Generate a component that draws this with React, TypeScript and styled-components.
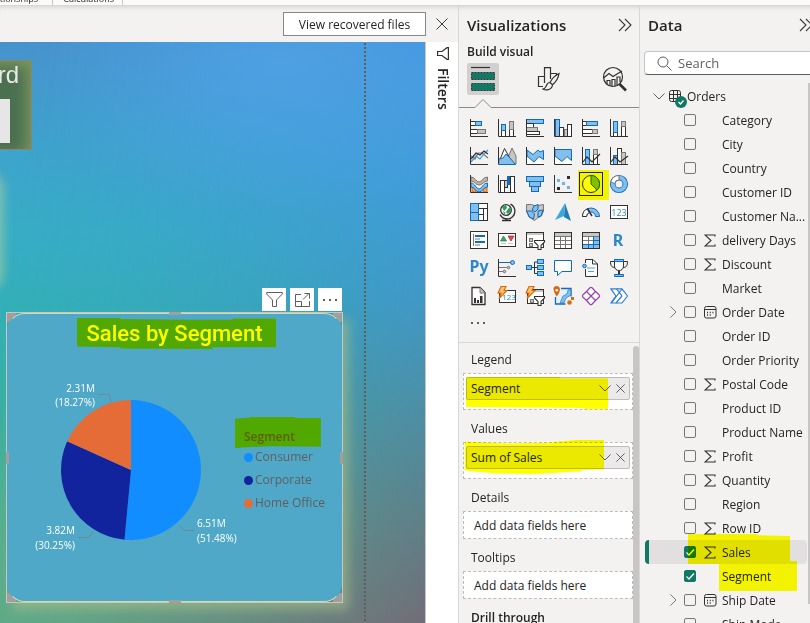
import React from "react";
import styled, { createGlobalStyle, css } from "styled-components";

const GlobalStyle = createGlobalStyle`
  * { box-sizing: border-box; }
  body {
    margin: 0;
    overflow: hidden;
    background: #f3f2f1;
    color: #252423;
    font-family: "Open Sans", "Noto Sans", sans-serif;
    font-size: 12px;
    line-height: 16px;
  }
  button, input { font: inherit; color: inherit; }
  button { padding: 0; border: 0; background: none; cursor: pointer; }
  h1, h2, h3, p, ul { margin: 0; padding: 0; font-size: inherit; }
  svg { display: block; }
`;

const DARK = "#323130";
const BLUE = "#0f6cbd";
const SKY = "#83beec";
const GRAY = "#c8c6c4";
const GRAY_LINE = "#797775";
const ORANGE = "#d8690e";

/* ---------- frame ---------- */

const Window = styled.div`
  display: flex;
  flex-direction: column;
  height: 100vh;
  overflow: hidden;
`;

const Ribbon = styled.header`
  position: relative;
  z-index: 2;
  display: flex;
  align-items: flex-end;
  flex: none;
  height: 6px;
  overflow: hidden;
  background: #fbfafa;
  border-bottom: 1px solid #d9d7d5;
  font-size: 9px;
  line-height: 12px;
`;

const RibbonGroup = styled.span<{ $width: number }>`
  display: flex;
  justify-content: flex-end;
  flex: none;
  width: ${(p) => p.$width}px;
  padding-right: ${(p) => (p.$width > 60 ? 8 : 14)}px;
  border-right: 1px solid #c8c6c4;
`;

const Panes = styled.div`
  display: flex;
  flex: 1;
  min-height: 0;
  box-shadow: inset 0 5px 5px -4px #d2d0ce;
`;

const ReportColumn = styled.main`
  display: flex;
  flex-direction: column;
  flex: 1;
  min-width: 0;
`;

const NoticeBar = styled.div`
  display: flex;
  align-items: center;
  justify-content: flex-end;
  flex: none;
  gap: 10px;
  height: 36px;
  padding-right: 10px;
`;

const RecoverButton = styled.button`
  width: 143px;
  height: 24px;
  padding-top: 2px;
  background: #fff;
  border: 1px solid #8a8886;
`;

const ReportRow = styled.div`
  display: flex;
  flex: 1;
  min-height: 0;
`;

const FiltersPane = styled.aside`
  display: flex;
  flex-direction: column;
  align-items: center;
  flex: none;
  gap: 8px;
  width: 33px;
  padding-top: 5px;
  padding-left: 2px;
  background: #fff;
  border-left: 1px solid #c8c6c4;
`;

const FiltersTitle = styled.h2`
  writing-mode: vertical-rl;
  font-size: 14px;
  line-height: 18px;
  font-weight: 600;
`;

/* ---------- canvas ---------- */

const Canvas = styled.section`
  position: relative;
  flex: 1;
  min-width: 0;
  overflow: hidden;
  background: linear-gradient(#4792cc 0%, #3ea3cc 18%, #37adc6 33%, #33b0b6 47%, #38b0a4 62%, #55b28e 84%, #60ae8a 100%);
  isolation: isolate;

  &::before {
    content: "";
    position: absolute;
    inset: 0;
    z-index: -1;
    background: linear-gradient(#4597e4 0%, #4398dc 25%, #4393c8 45%, #4f8ba8 62%, #607d88 82%, #716d78 100%);
    mask-image: linear-gradient(100deg, transparent 8%, rgba(0, 0, 0, 0.12) 32%, rgba(0, 0, 0, 0.45) 62%, #000 100%);
  }

  &::after {
    content: "";
    position: absolute;
    inset: 0;
    z-index: -1;
    background: radial-gradient(ellipse 260px 150px at 66% 4%, rgba(80, 164, 232, 0.75), transparent);
  }
`;

const PageEdge = styled.div`
  position: absolute;
  top: 1px;
  bottom: 0;
  right: 59px;
  width: 2px;
  background: repeating-linear-gradient(#605e5c 0 2px, transparent 2px 4px);
`;

const HeadingCard = styled.div`
  position: absolute;
  top: 18px;
  left: -120px;
  width: 152px;
  height: 90px;
  padding: 2px 12px 0 0;
  background: #4b7050;
  border: 1px solid #84877a;
  box-shadow: inset -5px 5px 14px #7b955f;
  color: #e9e9e9;
  font-family: "Liberation Sans", sans-serif;
  font-size: 24px;
  line-height: 24px;
  text-align: right;
`;

const HeadingSlot = styled.div`
  width: 129px;
  height: 44px;
  margin-top: 12px;
  background: #e6e6e6;
`;

const EdgeGlow = styled.div`
  position: absolute;
  top: 134px;
  left: -30px;
  width: 30px;
  height: 110px;
  border-radius: 12px;
  box-shadow: 0 0 10px 4px rgba(170, 205, 160, 0.6);
`;

const VisualTools = styled.div`
  position: absolute;
  top: 246px;
  left: 262px;
  display: flex;
  gap: 4px;
`;

const ToolButton = styled.button`
  display: grid;
  place-items: center;
  width: 24px;
  height: 23px;
  background: #fff;
`;

const VisualFrame = styled.article`
  position: absolute;
  top: 270px;
  left: 6px;
  width: 337px;
  height: 291px;
  border: 1px solid #c8c6c4;
  background:
    linear-gradient(#a19f9d, #a19f9d) 0 0 / 9px 9px,
    linear-gradient(#a19f9d, #a19f9d) 100% 0 / 9px 9px,
    linear-gradient(#a19f9d, #a19f9d) 0 100% / 9px 9px,
    linear-gradient(#a19f9d, #a19f9d) 100% 100% / 9px 9px;
  background-repeat: no-repeat;
  box-shadow: 6px 7px 10px rgba(165, 190, 135, 0.6);
`;

const VisualBody = styled.div`
  display: flex;
  flex-direction: column;
  height: 100%;
  background: #50a8c8;
  border: 1px solid #cfdcae;
  border-color: #cfdcae transparent;
  border-radius: 18px;
`;

const Handle = styled.i<{ $side: "top" | "bottom" | "left" | "right" }>`
  position: absolute;
  background: #a19f9d;
  ${(p) =>
    p.$side === "top" || p.$side === "bottom"
      ? css`left: calc(50% - 6px); width: 12px; height: 3px;`
      : css`top: calc(50% - 6px); width: 3px; height: 12px;`}
  ${(p) => p.$side}: -1px;
`;

const Marked = styled.span<{ $shape?: string; $inset: string }>`
  position: relative;
  &::after {
    content: "";
    position: absolute;
    inset: ${(p) => p.$inset};
    background: #ff0;
    mix-blend-mode: multiply;
    pointer-events: none;
    clip-path: ${(p) => p.$shape ?? "none"};
  }
`;

const VisualTitle = styled.h3`
  padding-top: 5px;
  color: #fff;
  font-family: Roboto, sans-serif;
  font-size: 22px;
  line-height: 29px;
  font-weight: 500;
  text-align: center;
`;

const ChartRow = styled.div`
  display: flex;
  flex: 1;
`;

const Legend = styled.div`
  display: flex;
  flex-direction: column;
  gap: 4px;
  padding-top: 81px;
  color: #605e5c;
`;

const LegendTitle = styled.strong`
  font-weight: 600;
`;

const LegendItems = styled.ul`
  display: grid;
  gap: 7px;
  list-style: none;
`;

const LegendItem = styled.li<{ $color: string }>`
  display: flex;
  align-items: center;
  gap: 2px;
  white-space: nowrap;
  &::before {
    content: "";
    width: 9px;
    height: 9px;
    border-radius: 50%;
    background: ${(p) => p.$color};
  }
`;

/* ---------- visualizations ---------- */

const VizPane = styled.aside`
  display: flex;
  flex-direction: column;
  flex: none;
  width: 182px;
  border-left: 1px solid #d9d7d5;
  border-right: 1px solid #d9d7d5;
`;

const PaneHeader = styled.div<{ $wide?: boolean }>`
  display: flex;
  align-items: center;
  justify-content: space-between;
  flex: none;
  height: 38px;
  margin-right: ${(p) => (p.$wide ? -10 : 0)}px;
  padding: 0 7px 0 8px;
`;

const PaneTitle = styled.h2`
  font-size: 15px;
  line-height: 20px;
  font-weight: 600;
`;

const SubTitle = styled.h3`
  padding: 0 8px;
  font-weight: 600;
`;

const ModeTabs = styled.div`
  display: flex;
  justify-content: space-between;
  padding: 3px 8px 0;
`;

const ModeTab = styled.button<{ $active?: boolean }>`
  display: grid;
  place-items: center;
  width: 32px;
  height: 32px;
  border-radius: 2px;
  background: ${(p) => (p.$active ? "#d2d0ce" : "transparent")};
`;

const TabPointer = styled.svg`
  flex: none;
  width: 100%;
  height: 13px;
`;

const IconGrid = styled.div`
  display: grid;
  grid-template-columns: repeat(6, 28px);
  grid-auto-rows: 28px;
  flex: none;
  padding: 6px 0 0 6px;
`;

const IconButton = styled.button<{ $selected?: boolean }>`
  display: grid;
  place-items: center;
  position: relative;
  ${(p) =>
    p.$selected &&
    css`
      &::before {
        content: "";
        position: absolute;
        inset: 2px;
        border: 1px solid #252423;
        background: #f3f2f1;
      }
      &::after {
        content: "";
        position: absolute;
        inset: 0 -4px -2px 1px;
        background: #ff0;
        mix-blend-mode: multiply;
      }
      svg { position: relative; }
    `}
`;

const MoreRow = styled.button`
  display: flex;
  flex: none;
  height: 32px;
  padding: 12px 12px 0;
`;

const FieldWells = styled.div`
  position: relative;
  flex: 1;
  min-height: 0;
  padding: 9px 6px 0 4px;
  overflow: hidden;
  border-top: 1px solid #d9d7d5;
`;

const WellLabel = styled.h3`
  padding: 0 8px 5px;
  font-weight: 400;
`;

const Well = styled.div<{ $filled?: boolean }>`
  position: relative;
  height: ${(p) => (p.$filled ? 37 : 28)}px;
  margin-bottom: 11px;
  padding: ${(p) => (p.$filled ? "3px 2px" : "6px 10px")};
  background: #fff;
  border: 1px dashed #bebbb8;
`;

const Chip = styled.div`
  display: flex;
  align-items: center;
  height: 23px;
  padding: 0 4px;
  gap: 5px;
  background: #ebe9e9;
  border: 1px solid #bebbb8;
  border-radius: 2px;
`;

const ChipText = styled.span`
  flex: 1;
`;

const Highlight = styled.span<{ $inset: string; $shape?: string }>`
  position: absolute;
  inset: ${(p) => p.$inset};
  background: #ff0;
  mix-blend-mode: multiply;
  pointer-events: none;
  clip-path: ${(p) => p.$shape ?? "none"};
`;

const ScrollThumb = styled.i`
  position: absolute;
  top: 3px;
  right: 0;
  bottom: -8px;
  width: 6px;
  border-radius: 3px;
  background: #c8c6c4;
`;

/* ---------- data ---------- */

const DataPane = styled.aside`
  position: relative;
  flex: none;
  width: 170px;
  overflow: hidden;
`;

const SearchBox = styled.label`
  display: flex;
  align-items: center;
  gap: 6px;
  height: 24px;
  margin: 7px -6px 9px 4px;
  padding-left: 12px;
  background: #fff;
  border: 1px solid #c8c6c4;
  border-bottom-color: #605e5c;
  border-radius: 4px;
`;

const SearchInput = styled.input`
  width: 110px;
  border: 0;
  outline: 0;
  padding: 0;
  background: transparent;
  font-size: 13px;
  &::placeholder { color: #616161; opacity: 1; }
`;

const TableRow = styled.div`
  display: flex;
  align-items: center;
  height: 24px;
  padding-left: 13px;
`;

const TableName = styled.span`
  padding-top: 2px;
`;

const TableBadge = styled.span`
  position: relative;
  margin: 0 6px 0 4px;
`;

const CheckBadge = styled.svg`
  position: absolute;
  top: 6px;
  left: 6px;
`;

const FieldList = styled.ul`
  list-style: none;
`;

const FieldRow = styled.li<{ $active?: boolean }>`
  position: relative;
  display: grid;
  grid-template-columns: 14px 12px 18px 1fr;
  align-items: center;
  height: 24px;
  margin: 0 3px 0 5px;
  padding-left: 25px;
  border-radius: 4px;
  ${(p) =>
    p.$active &&
    css`
      background: linear-gradient(to right, #117865 4px, #e1dfdf 4px);
    `}
`;

const Check = styled.input`
  appearance: none;
  width: 12px;
  height: 12px;
  margin: 0;
  border: 1px solid #797775;
  border-radius: 2px;
  &:checked {
    border-color: #117865;
    background: #117865;
  }
`;

const Tick = styled.svg`
  pointer-events: none;
`;

const CheckCell = styled.span`
  display: grid;
  & > * { grid-area: 1 / 1; }
`;

const Expander = styled.button`
  display: grid;
  place-items: center start;
`;

const FieldIcon = styled.span`
  padding-left: 8px;
  width: 26px;
`;

const FieldLabel = styled.label`
  padding: 2px 0 0 8px;
  white-space: nowrap;
`;

const DataThumb = styled.i`
  position: absolute;
  top: 77px;
  right: 0;
  width: 2px;
  height: 521px;
  background: #c8c6c4;
`;

/* ---------- small icons ---------- */

const CloseIcon = ({ size = 12 }: { size?: number }) => (
  <svg width={size} height={size} viewBox="0 0 12 12" stroke="#3b3a39" fill="none">
    <path d="M.5.5l11 11M11.5.5l-11 11" />
  </svg>
);

const DoubleChevron = () => (
  <svg width="14" height="14" viewBox="0 0 14 14" stroke="#3b3a39" fill="none" strokeWidth="1.1">
    <path d="M1 1l6 6-6 6M7 1l6 6-6 6" />
  </svg>
);

const ChevronDown = () => (
  <svg width="12" height="7" viewBox="0 0 12 7" stroke="#605e5c" fill="none">
    <path d="M.5.5L6 6 11.5.5" />
  </svg>
);

const Sigma = () => (
  <svg width="12" height="13" viewBox="0 0 12 13" stroke={DARK} fill="none" strokeWidth="1.1">
    <path d="M11 2.5V1H1l6 5.5L1 12h10v-1.5" />
  </svg>
);

const CalendarIcon = () => (
  <svg width="13" height="13" viewBox="0 0 13 13" stroke={DARK} fill="none">
    <rect x=".5" y=".5" width="11.5" height="11.5" rx="2" />
    <path d="M.5 3.5H12" />
    <path d="M3 6.5h7M3 9h5" strokeDasharray="1 1.7" strokeWidth="1.3" />
  </svg>
);

/* ---------- visual type icons, 18 x 18 ---------- */

const Axes = () => <path d="M.5 0v17.5H18" stroke={DARK} fill="none" />;

type BoxProps = { x: number; y: number; w: number; h: number; f?: string; s?: string };
const Box = ({ x, y, w, h, f = "#fff", s = DARK }: BoxProps) => (
  <rect x={x + 0.5} y={y + 0.5} width={w - 1} height={h - 1} fill={f} stroke={s} />
);

const SlicerFunnel = () => (
  <path d="M8.5 9.5h10v1.5l-3.5 3.5v4h-3v-4L8.5 11z" fill="#fff" stroke={DARK} strokeWidth="1.1" />
);

const Bolt = () => (
  <path d="M3-.5h5L6 3.5h3L1 11.5l2-5.5H0z" fill="#fbc16b" stroke={ORANGE} strokeWidth="1.1" />
);

const vizIcons: [string, React.ReactNode][] = [
  ["Stacked bar chart", <><Box x={0} y={2} w={7} h={5} /><Box x={5} y={2} w={7} h={5} f={SKY} s={BLUE} /><Box x={0} y={10} w={9} h={5} /><Box x={7} y={10} w={9} h={5} f={GRAY} s={GRAY_LINE} /><Axes /></>],
  ["Stacked column chart", <><Box x={3} y={11} w={5} h={7} /><Box x={3} y={5} w={5} h={7} f={SKY} s={BLUE} /><Box x={11} y={10} w={5} h={8} /><Box x={11} y={2} w={5} h={9} f={GRAY} s={GRAY_LINE} /><Axes /></>],
  ["Clustered bar chart", <><Box x={0} y={0} w={18} h={5} f={SKY} s={BLUE} /><Box x={0} y={4} w={8} h={5} /><Box x={0} y={8} w={12} h={5} f={GRAY} s={GRAY_LINE} /><Box x={0} y={12} w={14} h={4} /><Axes /></>],
  ["Clustered column chart", <><Box x={1} y={0} w={5} h={18} f={SKY} s={BLUE} /><Box x={5} y={8} w={5} h={10} /><Box x={10} y={10} w={4} h={8} f={GRAY} s={GRAY_LINE} /><Box x={13} y={5} w={5} h={13} /><Axes /></>],
  ["100% stacked bar chart", <><Box x={0} y={2} w={6} h={5} /><Box x={4} y={2} w={12} h={5} f={SKY} s={BLUE} /><Box x={0} y={10} w={12} h={5} /><Box x={10} y={10} w={6} h={5} f={GRAY} s={GRAY_LINE} /><Axes /></>],
  ["100% stacked column chart", <><Box x={3} y={12} w={5} h={6} /><Box x={3} y={2} w={5} h={12} f={SKY} s={BLUE} /><Box x={11} y={7} w={5} h={11} /><Box x={11} y={2} w={5} h={6} f={GRAY} s={GRAY_LINE} /><Axes /></>],
  ["Line chart", <><g fill="none" strokeWidth="1.2"><path d="M1 9l4 3 3-6 4 0 6 5" stroke={GRAY_LINE} /><path d="M1 15l5-6 4 3 4-5 4-4" stroke="#3a96dd" /><path d="M1 12l5-6 4 2 4-4 4 3" stroke={DARK} /></g><Axes /></>],
  ["Area chart", <><path d="M8 15l6-14 4 8v8H8z" fill={GRAY} stroke={GRAY_LINE} /><path d="M1 15L6.5 1.5 14 15z" fill="#fff" stroke={DARK} /><path d="M1 12l4-1 3-4 4 4 5.5 6.5H.5z" fill={SKY} stroke={BLUE} /><path d="M.5 0v17" stroke={DARK} /></>],
  ["Stacked area chart", <><path d="M1 10l7 7 5-4 5 4v1H1z" fill="#fff" /><path d="M1 3l6 4.5 5-4.5 2 2 3.5-1.5v9L13 9.5l-5 5.5-7-6z" fill={SKY} stroke={BLUE} /><Axes /></>],
  ["100% stacked area chart", <><path d="M1 10l6 5 5-4 5.5 4v2H1z" fill="#fff" /><path d="M1 2.5h16.5v11L13 9.5l-5 5L1 9z" fill={SKY} stroke={BLUE} /><Axes /></>],
  ["Line and stacked column chart", <><Box x={3} y={2} w={5} h={16} f={SKY} s={BLUE} /><Box x={11} y={2} w={5} h={16} /><Box x={11} y={2} w={5} h={6} f={GRAY} s={GRAY_LINE} /><path d="M1 15l4-5 5 5 8-8" fill="none" stroke={DARK} strokeWidth="1.2" /><Axes /></>],
  ["Line and clustered column chart", <><Box x={3} y={8} w={5} h={10} f={SKY} s={BLUE} /><Box x={7} y={1} w={5} h={17} /><Box x={11} y={5} w={5} h={13} f={GRAY} s={GRAY_LINE} /><path d="M1 15l4-5 5 5 8-6" fill="none" stroke={DARK} strokeWidth="1.2" /><Axes /></>],
  ["Ribbon chart", <><path d="M2 12h4v5H2zM13 12h4v5h-4z" fill="#f0a35c" stroke={ORANGE} /><path d="M1 8c4 0 5 6 8 6s4-6 8.5-6v4c-4 0-5 5-8.5 5S5 12 1 12z" fill={SKY} stroke={BLUE} /><path d="M1 2c4 0 5 5 8 5s4-5 8.5-5v4c-4 0-5 4-8.5 4S5 6 1 6z" fill="#c9b2a2" stroke={GRAY_LINE} /><Axes /></>],
  ["Waterfall chart", <><Box x={2} y={5} w={5} h={13} /><Box x={6} y={5} w={4} h={8} f={GRAY} /><Box x={9} y={1} w={3} h={9} f={BLUE} s={BLUE} /><Box x={12} y={1} w={5} h={17} /><Axes /></>],
  ["Funnel chart", <><Box x={0} y={1} w={18} h={6} f={SKY} s={BLUE} /><Box x={3} y={6} w={12} h={6} f={SKY} s={BLUE} /><Box x={5} y={11} w={8} h={6} f={SKY} s={BLUE} /></>],
  ["Scatter chart", <><g fill="#6cb2ea"><path d="M3 4h3v3H3zM8 7h3v3H8zM13 11h3v3h-3z" /></g><path d="M13 1h3v3h-3zM3 12h3v3H3z" fill={DARK} /><Axes /></>],
  ["Pie chart", <><circle cx="9" cy="9" r="8.5" fill="#fff" stroke={DARK} /><path d="M9 .5A8.5 8.5 0 0 1 15 15L9 9z" fill={SKY} stroke={BLUE} /></>],
  ["Donut chart", <><circle cx="9" cy="9" r="6.3" fill="none" stroke={BLUE} strokeWidth="5.6" /><circle cx="9" cy="9" r="6.3" fill="none" stroke={SKY} strokeWidth="3.8" /><path d="M9 .5A8.5 8.5 0 0 0 .8 7l4 1.5A4 4 0 0 1 9 5z" fill="#fff" stroke={GRAY_LINE} /></>],
  ["Treemap", <><Box x={8} y={0} w={10} h={18} /><path d="M8 5.5h10M13.5 5.5v12M8 11.5h5.5" stroke={DARK} /><Box x={0} y={0} w={9} h={18} f={SKY} s={BLUE} /><path d="M.5 9.5h8" stroke={BLUE} /></>],
  ["Map", <><path d="M12.5 1.2A7.8 7.8 0 1 1 2 11.5" fill="none" stroke={DARK} strokeWidth="1.3" /><circle cx="8" cy="7" r="5.3" fill="#fff" stroke={DARK} strokeWidth="1.3" /><path d="M4 4l4-2 1 3-3 3zM10 6l2-2 1 4-3 3-2-2zM5 8l3 2-2 1z" fill="#2b9b57" /><path d="M8 15v2.5M4 17.5h9" stroke={DARK} strokeWidth="1.3" /></>],
  ["Filled map", <><path d="M.5 1.500h5l4 1.500 8-1.500V8l-2 5-4 2-3 2.500L3 14 .5 8z" fill={GRAY} stroke={GRAY_LINE} /><path d="M8 3l4-1.500V6l-3 3-3-2zM.5 8h5l3 3-1 5-4-2z" fill={SKY} stroke={BLUE} /><path d="M12 8l5-1-2 6-3 1z" fill={SKY} stroke={BLUE} /></>],
  ["Azure map", <><path d="M11 0l6 18-7-4z" fill="#1f7db5" /><path d="M11 0L1 17l9-4z" fill="#3ba8dc" /></>],
  ["Gauge", <><path d="M.5 13.5a8.5 8.5 0 0 1 17 0h-4a4.5 4.5 0 0 0-9 0z" fill={SKY} stroke={BLUE} /><path d="M.5 13.5A8.5 8.5 0 0 1 6 5.5l1.5 4a4.5 4.5 0 0 0-3 4z" fill="#fff" stroke={DARK} /><path d="M5.5 6l4.5 7" stroke={DARK} strokeWidth="1.5" /></>],
  ["Card", <><Box x={0} y={2} w={18} h={14} /><text x="9" y="13" textAnchor="middle" fontSize="9" fill="#2b88d8">123</text></>],
  ["Multi-row card", <><Box x={0} y={0} w={18} h={18} /><path d="M3.5 3v12" stroke={GRAY_LINE} /><path d="M5 5h10M5 11h10" stroke={BLUE} strokeWidth="2" /><path d="M5 8h5M5 14h5" stroke={GRAY_LINE} /></>],
  ["KPI", <><Box x={0} y={2} w={18} h={14} /><path d="M2.5 10L5.5 5l3 5z" fill="#43a564" stroke="#217a3c" strokeWidth=".7" /><path d="M10 5h6l-3 5z" fill="#e24b4b" stroke="#b71c1c" strokeWidth=".7" /><path d="M3 12.5h5M10 12.5h5" stroke={GRAY} /></>],
  ["Slicer", <><Box x={0} y={1} w={18} h={16} /><path d="M1 2h16v2H1z" fill={GRAY} /><Box x={3} y={7} w={4} h={4} f={GRAY} s={GRAY_LINE} /><Box x={3} y={12} w={4} h={4} f={GRAY} s={GRAY_LINE} /><SlicerFunnel /></>],
  ["Table", <><Box x={0} y={1} w={18} h={17} /><path d="M1 2h16v3H1z" fill={GRAY} /><path d="M1 5.5h16M1 9.5h16M1 13.5h16M6.5 5v12M11.5 5v12" stroke={GRAY_LINE} /></>],
  ["Matrix", <><Box x={0} y={1} w={18} h={17} /><path d="M1 2h16v3H1z" fill={GRAY} /><path d="M12 5h5v12H1v-4h11z" fill={SKY} /><path d="M1 5.5h16M1 9.5h11M6.5 5v8" stroke={GRAY_LINE} /><path d="M12 9.5h5M1 13.5h16M6.5 13v4M11.5 5v12" stroke={BLUE} /></>],
  ["R script visual", <text x="8" y="15" textAnchor="middle" fontFamily="Noto Sans" fontSize="16" fontWeight="700" fill="#2b88c8">R</text>],
  ["Python visual", <text x="9" y="13" textAnchor="middle" fontFamily="Noto Sans" fontSize="16" fontWeight="700" fill="#2b88c8">Py</text>],
  ["Key influencers", <><path d="M1 3.5h12" stroke={BLUE} /><circle cx="14.5" cy="3.5" r="2" fill={SKY} stroke={BLUE} /><path d="M1 8.5h8M1 12.5h5" stroke={GRAY_LINE} /><circle cx="10.5" cy="8.5" r="1.3" fill={GRAY} stroke={GRAY_LINE} /><circle cx="6.5" cy="12.5" r="1.3" fill={GRAY} stroke={GRAY_LINE} /><Axes /></>],
  ["Decomposition tree", <><path d="M5 8.5h6M8.5 3v11.5M8.5 3H11M8.5 14.5H11" fill="none" stroke={DARK} /><Box x={0} y={6} w={6} h={5} f={SKY} s={BLUE} /><Box x={11} y={0} w={7} h={5} f={SKY} s={BLUE} /><Box x={11} y={6} w={7} h={5} f={SKY} s={BLUE} /><Box x={11} y={12} w={7} h={5} f={SKY} s={BLUE} /></>],
  ["Q&A", <path d="M.5 1.5h17v11H8l-4.5 4v-4h-3z" fill="#fff" stroke={BLUE} />],
  ["Smart narrative", <><path d="M3.5 4V.5H11l4.5 4.5v12.5h-12V10" fill="#fff" stroke={DARK} /><path d="M10.5.5V5h5" fill="none" stroke={DARK} /><path d="M5 9h8M6 12.5h6" stroke="#4f9fe0" /><circle cx="2.5" cy="7" r="1.8" fill={SKY} stroke={BLUE} /></>],
  ["Metrics", <><path d="M4.5 2.5h-4c0 4 1 6 4.5 6M13.5 2.5h4c0 4-1 6-4.5 6" fill="none" stroke={DARK} /><path d="M4.5.5h9V7c0 3-2 4.5-4.5 4.5S4.5 10 4.5 7z" fill="#fff" stroke={DARK} /><path d="M4.5.5h9v2h-9z" fill={SKY} stroke={BLUE} /><path d="M9 12v3" stroke={DARK} strokeWidth="2" /><path d="M4.5 15.5h9v2h-9z" fill={SKY} stroke={BLUE} /></>],
  ["Paginated report", <><path d="M2 .5h8l5 5V17.5H2z" fill="#fff" stroke={DARK} strokeWidth="1.3" /><path d="M10 .5V6h5" fill={GRAY} stroke={GRAY_LINE} /><path d="M4 11h2v5H4zM7 13h2v3H7zM10 9h2.5v7H10z" fill={DARK} /></>],
  ["Card (new)", <><Box x={1} y={3} w={17} h={13} /><text x="11" y="13" textAnchor="middle" fontSize="8" fill="#2b88d8">123</text><Bolt /></>],
  ["Slicer (new)", <><Box x={1} y={2} w={17} h={15} /><path d="M2 3h15v2H2z" fill={GRAY} /><Box x={4} y={12} w={4} h={4} f={GRAY} s={GRAY_LINE} /><SlicerFunnel /><Bolt /></>],
  ["ArcGIS maps", <><path d="M1.5 1.5h15.5v11h-4v4.5H1.5z" fill="#e6f2fb" /><path d="M7 1.5h10v8M1.5 10v7h10" fill="none" stroke={BLUE} strokeWidth="1.3" /><path d="M6 16l3-7 4-2 1-4h3v5l-5 3-2 5z" fill={SKY} stroke={BLUE} strokeWidth=".6" /><path d="M-.5 1a3.4 3.4 0 0 1 6.5 1c0 3-1.5 5-3.2 7.5C1 7 -.5 5-.5 1z" fill={ORANGE} /><circle cx="2.8" cy="3.2" r="1.3" fill="#fff" /><path d="M17 10h3v3h-3z" fill={ORANGE} /><circle cx="15.5" cy="15.5" r="2.3" fill={ORANGE} /></>],
  ["Power Apps", <g fill="#fff" stroke="#9a3fa8" strokeWidth="1.2"><path d="M4.5 4.5L8 .8q1-.8 2 0l3.5 3.7L9 9zM4.5 13.5L8 17.2q1 .8 2 0l3.5-3.7L9 9zM4.5 4.5L.8 8q-.8 1 0 2l3.7 3.5L9 9zM13.5 4.5L17.2 8q.8 1 0 2l-3.7 3.5L9 9z" /></g>],
  ["Power Automate", <g fill="#fff" stroke="#2b7cd3" strokeWidth="1.2" strokeLinejoin="round"><path d="M.8 1.8h11.2L17.5 9 12 16H.8L6 9z" /><path d="M1.5 16L12 2M6.5 1.8l5.5 7M6 16l6-7" fill="none" /></g>],
];

/* ---------- chart ---------- */

const slices = [
  { name: "Consumer", value: 51.48, color: "#118dff" },
  { name: "Corporate", value: 30.25, color: "#12239e" },
  { name: "Home Office", value: 18.27, color: "#e66c37" },
];

const ChartSvg = styled.svg`
  flex: none;
  font-size: 10px;
`;

const Pie = () => {
  const cx = 123;
  const cy = 122;
  const r = 70;
  let start = 0;
  const point = (t: number) =>
    `${(cx + r * Math.sin(t * Math.PI * 2)).toFixed(2)} ${(cy - r * Math.cos(t * Math.PI * 2)).toFixed(2)}`;
  return (
    <ChartSvg width="236" height="220" viewBox="0 0 236 220" role="img" aria-label="Sales by Segment">
      {slices.map((s) => {
        const end = start + s.value / 100;
        const d = `M${cx} ${cy}L${point(start)}A${r} ${r} 0 ${s.value > 50 ? 1 : 0} 1 ${point(end)}Z`;
        start = end;
        return <path key={s.name} d={d} fill={s.color} />;
      })}
      <g fill="none" stroke="#6d8b97">
        <path d="M90 46.5h11l2 7M70 189.5h11l4-6M171 177l5 5.5h10" />
      </g>
      <g fill="#fff" textAnchor="end">
        <text x="87" y="44">2.31M</text>
        <text x="87" y="58">(18.27%)</text>
        <text x="67" y="186">3.82M</text>
        <text x="67" y="201">(30.25%)</text>
      </g>
      <g fill="#fff">
        <text x="189" y="179">6.51M</text>
        <text x="189" y="194">(51.48%)</text>
      </g>
    </ChartSvg>
  );
};

/* ---------- data ---------- */

type Field = { name: string; kind?: "sum" | "date"; checked?: boolean; active?: boolean };

const fields: Field[] = [
  { name: "Category" },
  { name: "City" },
  { name: "Country" },
  { name: "Customer ID" },
  { name: "Customer Na..." },
  { name: "delivery Days", kind: "sum" },
  { name: "Discount", kind: "sum" },
  { name: "Market" },
  { name: "Order Date", kind: "date" },
  { name: "Order ID" },
  { name: "Order Priority" },
  { name: "Postal Code", kind: "sum" },
  { name: "Product ID" },
  { name: "Product Name" },
  { name: "Profit", kind: "sum" },
  { name: "Quantity", kind: "sum" },
  { name: "Region" },
  { name: "Row ID", kind: "sum" },
  { name: "Sales", kind: "sum", checked: true, active: true },
  { name: "Segment", checked: true },
  { name: "Ship Date", kind: "date" },
  { name: "Ship Mode" },
];

const FieldItem = ({ field }: { field: Field }) => {
  const id = `field-${field.name.replace(/\W+/g, "-")}`;
  return (
    <FieldRow $active={field.active}>
      {field.kind === "date" ? (
        <Expander aria-label={`Expand ${field.name}`}>
          <svg width="7" height="12" viewBox="0 0 7 12" stroke="#797775" fill="none">
            <path d="M.5.5L6 6 .5 11.5" />
          </svg>
        </Expander>
      ) : (
        <span />
      )}
      <CheckCell>
        <Check type="checkbox" id={id} defaultChecked={field.checked} />
        {field.checked && (
          <Tick width="12" height="12" viewBox="0 0 12 12" stroke="#fff" fill="none" strokeWidth="1.3">
            <path d="M2.5 6.5l2.5 2.5 5-5.5" />
          </Tick>
        )}
      </CheckCell>
      <FieldIcon>
        {field.kind === "sum" && <Sigma />}
        {field.kind === "date" && <CalendarIcon />}
      </FieldIcon>
      <FieldLabel htmlFor={id}>{field.name}</FieldLabel>
      {field.name === "Sales" && (
        <Highlight $inset="-6px 17px 0 43px" $shape="polygon(0 0, 68% 0, 68% 4%, 100% 7%, 100% 100%, 0 100%)" />
      )}
      {field.name === "Segment" && <Highlight $inset="-3px 10px -3px 74px" />}
    </FieldRow>
  );
};

const FilledWell = ({ name, inset, shape }: { name: string; inset: string; shape: string }) => (
  <Well $filled>
    <Chip>
      <ChipText>{name}</ChipText>
      <button aria-label={`${name} options`}><ChevronDown /></button>
      <button aria-label={`Remove ${name}`}><CloseIcon size={9} /></button>
    </Chip>
    <Highlight $inset={inset} $shape={shape} />
  </Well>
);

export default function App() {
  return (
    <>
      <GlobalStyle />
      <Window>
        <Ribbon>
          <RibbonGroup $width={53}>Relationships</RibbonGroup>
          <RibbonGroup $width={70}>Calculations</RibbonGroup>
        </Ribbon>
        <Panes>
          <ReportColumn>
            <NoticeBar>
              <RecoverButton>View recovered files</RecoverButton>
              <button aria-label="Close"><CloseIcon /></button>
            </NoticeBar>
            <ReportRow>
              <Canvas>
                <PageEdge />
                <HeadingCard>
                  Dashboard
                  <HeadingSlot />
                </HeadingCard>
                <EdgeGlow />
                <VisualTools>
                  <ToolButton aria-label="Filters on this visual">
                    <svg width="17" height="15" viewBox="0 0 17 15" fill="none" stroke="#605e5c">
                      <path d="M.7.5h15.6v1.5L10.5 8v6.5h-4V8L.7 2z" />
                    </svg>
                  </ToolButton>
                  <ToolButton aria-label="Focus mode">
                    <svg width="15" height="14" viewBox="0 0 15 14" fill="none" stroke="#605e5c">
                      <path d="M6 1.5H.5v12h14V8M.5 8.5h6v5M8 6.5l6-6M9.5.5h5v5" />
                    </svg>
                  </ToolButton>
                  <ToolButton aria-label="More options">
                    <svg width="16" height="4" viewBox="0 0 16 4" fill="#605e5c">
                      <path d="M1 1h2v2H1zM7 1h2v2H7zM13 1h2v2h-2z" />
                    </svg>
                  </ToolButton>
                </VisualTools>
                <VisualFrame>
                  <VisualBody>
                    <VisualTitle>
                      <Marked
                        $inset="-3px -14px -3px -10px"
                        $shape="polygon(0 0, 22% 0, 22% 3%, 58% 6%, 78% 6%, 78% 2%, 100% 2%, 100% 94%, 68% 94%, 68% 100%, 22% 98%, 22% 94%, 0 92%)"
                      >
                        Sales by Segment
                      </Marked>
                    </VisualTitle>
                    <ChartRow>
                      <Pie />
                      <Legend>
                        <LegendTitle>
                          <Marked
                            $inset="-11px -26px -3px -9px"
                            $shape="polygon(0 6%, 18% 2%, 18% 0, 70% 0, 70% 3%, 100% 3%, 100% 96%, 40% 94%, 0 100%)"
                          >
                            Segment
                          </Marked>
                        </LegendTitle>
                        <LegendItems>
                          {slices.map((s) => (
                            <LegendItem key={s.name} $color={s.color}>{s.name}</LegendItem>
                          ))}
                        </LegendItems>
                      </Legend>
                    </ChartRow>
                  </VisualBody>
                  <Handle $side="top" />
                  <Handle $side="bottom" />
                  <Handle $side="left" />
                  <Handle $side="right" />
                </VisualFrame>
              </Canvas>
              <FiltersPane>
                <svg width="12" height="13" viewBox="0 0 12 13" fill="none" stroke={DARK} strokeWidth="1.2">
                  <path d="M11.4.7v11.6H10L5 8.5H.6v-4H5L10 .7z" />
                </svg>
                <FiltersTitle>Filters</FiltersTitle>
              </FiltersPane>
            </ReportRow>
          </ReportColumn>

          <VizPane>
            <PaneHeader>
              <PaneTitle>Visualizations</PaneTitle>
              <button aria-label="Collapse visualizations"><DoubleChevron /></button>
            </PaneHeader>
            <SubTitle>Build visual</SubTitle>
            <ModeTabs>
              <ModeTab $active aria-label="Build visual">
                <svg width="24" height="26" viewBox="0 0 24 26">
                  <path d="M0 1.5h19" stroke={DARK} strokeWidth="1.2" />
                  <path d="M.5 6.5h23v7H.5zM.5 17.5h23v7H.5z" fill="#117865" stroke={DARK} strokeDasharray="2 1" />
                </svg>
              </ModeTab>
              <ModeTab aria-label="Format visual">
                <svg width="24" height="24" viewBox="0 0 24 24" fill="none" stroke={DARK} strokeWidth="1.2">
                  <path d="M6 19.5H1.5v-10h6M7.5 16V.6h6V12M13.5 6.5h6v2" />
                  <path d="M22 6.5c-4 2-7 5-9 9l2.5 2.3c3.5-3 6-7 6.5-11.3zM13 15.5c-3 0-3 2-4 4s-2.5 2.5-3.5 2.5c3 1.5 9.5 1.5 10-4.2z" />
                </svg>
              </ModeTab>
              <ModeTab aria-label="Analytics">
                <svg width="26" height="26" viewBox="0 0 26 26" fill="none" stroke={DARK} strokeWidth="1.2">
                  <circle cx="11" cy="11" r="9.5" />
                  <path d="M17.5 18l6.5 6.5" strokeWidth="2.6" />
                  <path d="M1.5 12l5.5-4.5 4 3L20 5" />
                  <path d="M5 18.5v-4h3V20M10 20.5v-7h3v7M15 19v-8h3v5" />
                </svg>
              </ModeTab>
            </ModeTabs>
            <TabPointer viewBox="0 0 180 13" preserveAspectRatio="xMinYMin slice" fill="none" stroke="#8a8886">
              <path d="M0 12.5h16l8-8 8 8h400" />
            </TabPointer>
            <IconGrid>
              {vizIcons.map(([name, art]) => (
                <IconButton key={name} aria-label={name} $selected={name === "Pie chart"}>
                  <svg width="18" height="18" viewBox="0 0 18 18" overflow="visible">{art}</svg>
                </IconButton>
              ))}
            </IconGrid>
            <MoreRow aria-label="More visuals">
              <svg width="15" height="2" viewBox="0 0 15 2" fill="#605e5c">
                <path d="M0 0h2v2H0zM6 0h2v2H6zM12 0h2v2h-2z" />
              </svg>
            </MoreRow>
            <FieldWells>
              <WellLabel>Legend</WellLabel>
              <FilledWell
                name="Segment"
                inset="3px 24px 0 2px"
                shape="polygon(0 0, 66% 0, 66% 4%, 100% 4%, 100% 100%, 83% 100%, 83% 97%, 0 94%)"
              />
              <WellLabel>Values</WellLabel>
              <FilledWell
                name="Sum of Sales"
                inset="-3px 28px 4px 1px"
                shape="polygon(0 5%, 30% 10%, 60% 8%, 80% 0, 100% 0, 100% 86%, 84% 88%, 84% 92%, 50% 100%, 20% 98%, 0 90%)"
              />
              <WellLabel>Details</WellLabel>
              <Well>Add data fields here</Well>
              <WellLabel>Tooltips</WellLabel>
              <Well>Add data fields here</Well>
              <SubTitle>Drill through</SubTitle>
              <ScrollThumb />
            </FieldWells>
          </VizPane>

          <DataPane>
            <PaneHeader $wide>
              <PaneTitle>Data</PaneTitle>
              <button aria-label="Collapse data"><DoubleChevron /></button>
            </PaneHeader>
            <SearchBox>
              <svg width="15" height="15" viewBox="0 0 15 15" fill="none" stroke="#605e5c">
                <circle cx="6" cy="6" r="5" />
                <path d="M9.5 9.5l5 5" />
              </svg>
              <SearchInput type="text" placeholder="Search" aria-label="Search" />
            </SearchBox>
            <TableRow>
              <ChevronDown />
              <TableBadge>
                <svg width="12" height="12" viewBox="0 0 12 12" fill="none" stroke={DARK}>
                  <rect x=".5" y=".5" width="11" height="11" rx="2" />
                  <path d="M4.5.5v11M8.5.5v11M.5 4.5h11M.5 8.5h11" />
                </svg>
                <CheckBadge width="12" height="12" viewBox="0 0 12 12">
                  <circle cx="6" cy="6" r="6" fill="#117865" />
                  <path d="M3.5 6l2 2 3-3.5" fill="none" stroke="#fff" strokeWidth="1.3" />
                </CheckBadge>
              </TableBadge>
              <TableName>Orders</TableName>
            </TableRow>
            <FieldList>
              {fields.map((f) => (
                <FieldItem key={f.name} field={f} />
              ))}
            </FieldList>
            <DataThumb />
          </DataPane>
        </Panes>
      </Window>
    </>
  );
}
